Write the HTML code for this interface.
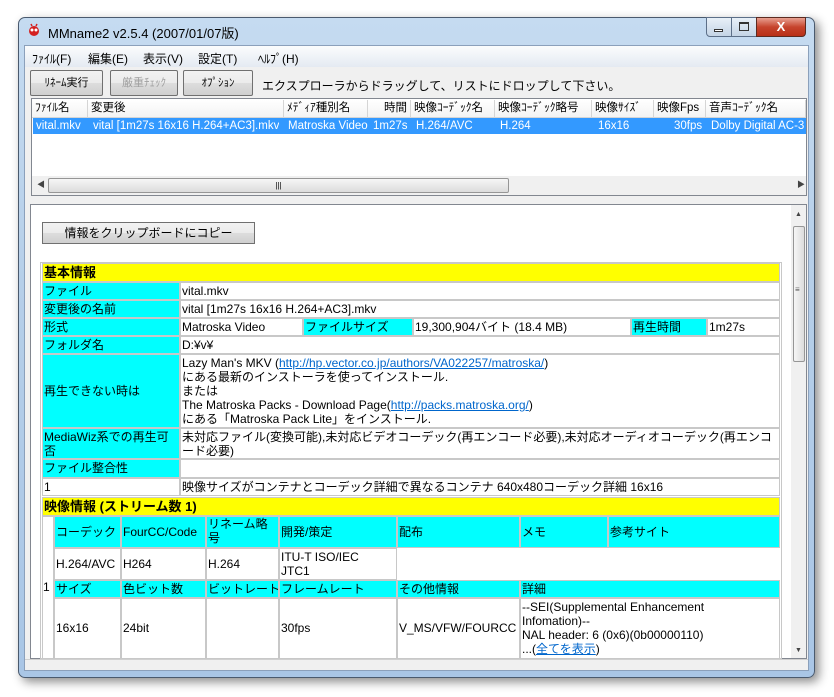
<!DOCTYPE html>
<html><head><meta charset="utf-8"><style>
*{box-sizing:border-box;margin:0;padding:0}
body{width:834px;height:697px;background:#fff;position:relative;overflow:hidden;font-family:"Liberation Sans","Noto Sans CJK JP",sans-serif;font-size:12px;color:#000}
.a{position:absolute}
.win{left:18px;top:17px;width:797px;height:661px;border-radius:7px;background:linear-gradient(#c5dbf1,#b6cfe9 40%,#a9c6e6);border:1px solid #4a5a6e;box-shadow:4px 4px 10px rgba(0,0,0,.45)}
.cl{left:24px;top:45px;width:785px;height:626px;background:#f0f0f0;border:1px solid #8ba0bb}
.c{position:absolute;overflow:hidden;white-space:nowrap;line-height:17px;padding-left:1px;border:1px solid #c8c8c8}
.y{background:#ffff00;font-weight:bold;font-size:13px}
.q{background:#00ffff}
.w{background:#fff}
.btn{position:absolute;height:26px;border:1px solid #707070;border-radius:2px;background:linear-gradient(#f2f2f2,#ebebeb 50%,#dddddd 51%,#cfcfcf);text-align:center;line-height:24px;font-size:11px}
.h{position:absolute;top:100px;height:18px;border-right:1px solid #d5d5d5;line-height:17px;padding-left:3px;font-size:11.5px;overflow:hidden;white-space:nowrap;background:linear-gradient(#fff,#f3f3f3)}
.r{position:absolute;top:118px;height:16px;line-height:16px;color:#fff;padding-left:2px;font-size:11.5px;white-space:nowrap;overflow:hidden}
a{color:#0066cc;text-decoration:underline}
</style></head><body>
<div class="a win"></div>
<div class="a" style="left:27px;top:22px;width:14px;height:16px;"><svg width="14" height="16"><circle cx="7" cy="9" r="5" fill="#d42020"/><circle cx="5" cy="8" r="1.5" fill="#fff"/><circle cx="9" cy="8" r="1.5" fill="#fff"/><line x1="4" y1="2" x2="5" y2="4" stroke="#d42020" stroke-width="1.5"/><line x1="10" y1="2" x2="9" y2="4" stroke="#d42020" stroke-width="1.5"/></svg></div>
<div class="a" style="left:48px;top:23px;font-size:13px;color:#000">MMname2 v2.5.4 (2007/01/07版)</div>
<div class="a" style="left:706px;top:17px;width:26px;height:20px;border:1px solid #5c6f88;border-radius:0 0 0 4px;background:linear-gradient(#e8f0f8,#c4d4e6)"></div>
<div class="a" style="left:731px;top:17px;width:26px;height:20px;border:1px solid #5c6f88;background:linear-gradient(#e8f0f8,#c4d4e6)"></div>
<div class="a" style="left:756px;top:17px;width:50px;height:20px;border:1px solid #5c2a20;border-radius:0 0 4px 0;background:linear-gradient(#e8a090,#c6442d 50%,#b83018);color:#fff;text-align:center;font-weight:bold;line-height:18px;font-size:13px">X</div>
<div class="a" style="left:714px;top:29px;width:9px;height:3px;border:1px solid #333;background:#fff"></div>
<div class="a" style="left:739px;top:22px;width:10px;height:9px;border:1px solid #333;border-top-width:2px"></div>
<div class="a cl"></div>
<div class="a" style="left:25px;top:46px;width:783px;height:21px;background:linear-gradient(#fbfcfd,#e4eaf2)"></div>
<div class="a" style="left:32px;top:50px;font-size:12px">ﾌｧｲﾙ(F)</div>
<div class="a" style="left:88px;top:50px">編集(E)</div>
<div class="a" style="left:143px;top:50px">表示(V)</div>
<div class="a" style="left:198px;top:50px">設定(T)</div>
<div class="a" style="left:258px;top:50px">ﾍﾙﾌﾟ(H)</div>
<div class="btn" style="left:30px;top:70px;width:73px">ﾘﾈｰﾑ実行</div>
<div class="btn" style="left:110px;top:70px;width:68px;color:#a0a0a0">厳重ﾁｪｯｸ</div>
<div class="btn" style="left:183px;top:70px;width:70px">ｵﾌﾟｼｮﾝ</div>
<div class="a" style="left:262px;top:77px;font-size:12px">エクスプローラからドラッグして、リストにドロップして下さい。</div>
<div class="a" style="left:31px;top:98px;width:776px;height:98px;background:#fff;border:1px solid #828790"></div>
<div class="h" style="left:32px;width:56px">ﾌｧｲﾙ名</div>
<div class="h" style="left:88px;width:196px">変更後</div>
<div class="h" style="left:284px;width:84px">ﾒﾃﾞｨｱ種別名</div>
<div class="h" style="left:368px;width:43px;text-align:right;padding-right:3px">時間</div>
<div class="h" style="left:411px;width:84px">映像ｺｰﾃﾞｯｸ名</div>
<div class="h" style="left:495px;width:97px">映像ｺｰﾃﾞｯｸ略号</div>
<div class="h" style="left:592px;width:62px">映像ｻｲｽﾞ</div>
<div class="h" style="left:654px;width:52px">映像Fps</div>
<div class="h" style="left:706px;width:100px">音声ｺｰﾃﾞｯｸ名</div>
<div class="a" style="left:32px;top:117px;width:774px;height:1px;background:#d5d5d5"></div>
<div class="a" style="left:33px;top:118px;width:773px;height:16px;background:#3399ff"></div>
<div class="r" style="left:34px">vital.mkv</div>
<div class="r" style="left:91px">vital [1m27s 16x16 H.264+AC3].mkv</div>
<div class="r" style="left:286px">Matroska Video</div>
<div class="r" style="left:371px">1m27s</div>
<div class="r" style="left:414px">H.264/AVC</div>
<div class="r" style="left:498px">H.264</div>
<div class="r" style="left:596px">16x16</div>
<div class="r" style="left:672px">30fps</div>
<div class="r" style="left:709px;width:97px">Dolby Digital AC-3</div>
<div class="a" style="left:32px;top:176px;width:774px;height:19px;background:#f0f0f0"></div>
<div class="a" style="left:48px;top:178px;width:461px;height:15px;border:1px solid #969696;border-radius:2px;background:linear-gradient(#f6f6f6,#dcdcdc);text-align:center;font-size:8px;line-height:13px">|||</div>
<div class="a" style="left:37px;top:179px;font-size:8px;color:#444">◀</div>
<div class="a" style="left:797px;top:179px;font-size:8px;color:#444">▶</div>
<div class="a" style="left:30px;top:204px;width:777px;height:455px;background:#fff;border:1px solid #828790"></div>
<div class="a" style="left:791px;top:205px;width:15px;height:453px;background:#f0f0f0"></div>
<div class="a" style="left:793px;top:226px;width:12px;height:136px;border:1px solid #969696;border-radius:2px;background:linear-gradient(90deg,#f6f6f6,#dcdcdc)"></div>
<div class="a" style="left:795px;top:288px;font-size:8px;line-height:3px;color:#555">≡</div>
<div class="a" style="left:795px;top:211px;font-size:7px;color:#444">▲</div>
<div class="a" style="left:795px;top:647px;font-size:7px;color:#444">▼</div>
<div class="btn" style="left:42px;top:222px;width:213px;height:22px;line-height:20px;font-size:12px;border-radius:0">情報をクリップボードにコピー</div>
<div class="a" style="left:40px;top:262px;width:742px;height:397px;border:1px solid #c8c8c8"></div>
<div class="c y" style="left:42px;top:263px;width:738px;height:19px">基本情報</div>
<div class="c q" style="left:42px;top:282px;width:138px;height:18px">ファイル</div>
<div class="c w" style="left:180px;top:282px;width:600px;height:18px">vital.mkv</div>
<div class="c q" style="left:42px;top:300px;width:138px;height:18px">変更後の名前</div>
<div class="c w" style="left:180px;top:300px;width:600px;height:18px">vital [1m27s 16x16 H.264+AC3].mkv</div>
<div class="c q" style="left:42px;top:318px;width:138px;height:18px">形式</div>
<div class="c w" style="left:180px;top:318px;width:123px;height:18px">Matroska Video</div>
<div class="c q" style="left:303px;top:318px;width:110px;height:18px">ファイルサイズ</div>
<div class="c w" style="left:413px;top:318px;width:218px;height:18px">19,300,904バイト (18.4 MB)</div>
<div class="c q" style="left:631px;top:318px;width:76px;height:18px">再生時間</div>
<div class="c w" style="left:707px;top:318px;width:73px;height:18px">1m27s</div>
<div class="c q" style="left:42px;top:336px;width:138px;height:18px">フォルダ名</div>
<div class="c w" style="left:180px;top:336px;width:600px;height:18px">D:¥v¥</div>
<div class="c q" style="left:42px;top:354px;width:138px;height:74px;line-height:72px">再生できない時は</div>
<div class="c w" style="left:180px;top:354px;width:600px;height:74px;line-height:14px;padding-top:1px">Lazy Man's MKV (<a>http://hp.vector.co.jp/authors/VA022257/matroska/</a>)<br>にある最新のインストーラを使ってインストール.<br>または<br>The Matroska Packs - Download Page(<a>http://packs.matroska.org/</a>)<br>にある「Matroska Pack Lite」をインストール.</div>
<div class="c q" style="left:42px;top:428px;width:138px;height:31px;line-height:14px;white-space:normal;padding-top:1px">MediaWiz系での再生可否</div>
<div class="c w" style="left:180px;top:428px;width:600px;height:31px;line-height:14px;white-space:normal;padding-top:1px">未対応ファイル(変換可能),未対応ビデオコーデック(再エンコード必要),未対応オーディオコーデック(再エンコード必要)</div>
<div class="c q" style="left:42px;top:459px;width:138px;height:19px">ファイル整合性</div>
<div class="c w" style="left:180px;top:459px;width:600px;height:19px"></div>
<div class="c w" style="left:42px;top:478px;width:138px;height:18px">1</div>
<div class="c w" style="left:180px;top:478px;width:600px;height:18px">映像サイズがコンテナとコーデック詳細で異なるコンテナ 640x480コーデック詳細 16x16</div>
<div class="c y" style="left:42px;top:497px;width:738px;height:19px">映像情報 (ストリーム数 1)</div>
<div class="c w" style="left:42px;top:516px;width:12px;height:143px;line-height:140px;padding:0">1</div>
<div class="c q" style="left:54px;top:516px;width:67px;height:32px;line-height:30px">コーデック</div>
<div class="c q" style="left:121px;top:516px;width:85px;height:32px;line-height:30px">FourCC/Code</div>
<div class="c q" style="left:206px;top:516px;width:73px;height:32px;line-height:14px;white-space:normal">リネーム略号</div>
<div class="c q" style="left:279px;top:516px;width:118px;height:32px;line-height:30px">開発/策定</div>
<div class="c q" style="left:397px;top:516px;width:123px;height:32px;line-height:30px">配布</div>
<div class="c q" style="left:520px;top:516px;width:88px;height:32px;line-height:30px">メモ</div>
<div class="c q" style="left:608px;top:516px;width:172px;height:32px;line-height:30px">参考サイト</div>
<div class="c w" style="left:54px;top:548px;width:67px;height:32px;line-height:30px">H.264/AVC</div>
<div class="c w" style="left:121px;top:548px;width:85px;height:32px;line-height:30px">H264</div>
<div class="c w" style="left:206px;top:548px;width:73px;height:32px;line-height:30px">H.264</div>
<div class="c w" style="left:279px;top:548px;width:118px;height:32px;line-height:14px;padding-top:1px">ITU-T ISO/IEC<br>JTC1</div>
<div class="c q" style="left:54px;top:580px;width:67px;height:18px">サイズ</div>
<div class="c q" style="left:121px;top:580px;width:85px;height:18px">色ビット数</div>
<div class="c q" style="left:206px;top:580px;width:73px;height:18px">ビットレート</div>
<div class="c q" style="left:279px;top:580px;width:118px;height:18px">フレームレート</div>
<div class="c q" style="left:397px;top:580px;width:123px;height:18px">その他情報</div>
<div class="c q" style="left:520px;top:580px;width:260px;height:18px">詳細</div>
<div class="c w" style="left:54px;top:598px;width:67px;height:61px;line-height:58px">16x16</div>
<div class="c w" style="left:121px;top:598px;width:85px;height:61px;line-height:58px">24bit</div>
<div class="c w" style="left:206px;top:598px;width:73px;height:61px"></div>
<div class="c w" style="left:279px;top:598px;width:118px;height:61px;line-height:58px">30fps</div>
<div class="c w" style="left:397px;top:598px;width:123px;height:61px;line-height:58px">V_MS/VFW/FOURCC</div>
<div class="c w" style="left:520px;top:598px;width:260px;height:61px;line-height:14px;padding-top:1px">--SEI(Supplemental Enhancement<br>Infomation)--<br>NAL header: 6 (0x6)(0b00000110)<br>...(<a>全てを表示</a>)</div>
<div class="a" style="left:25px;top:659px;width:783px;height:11px;background:#f0f0f0;border-top:1px solid #d0d0d0"></div>
</body></html>
